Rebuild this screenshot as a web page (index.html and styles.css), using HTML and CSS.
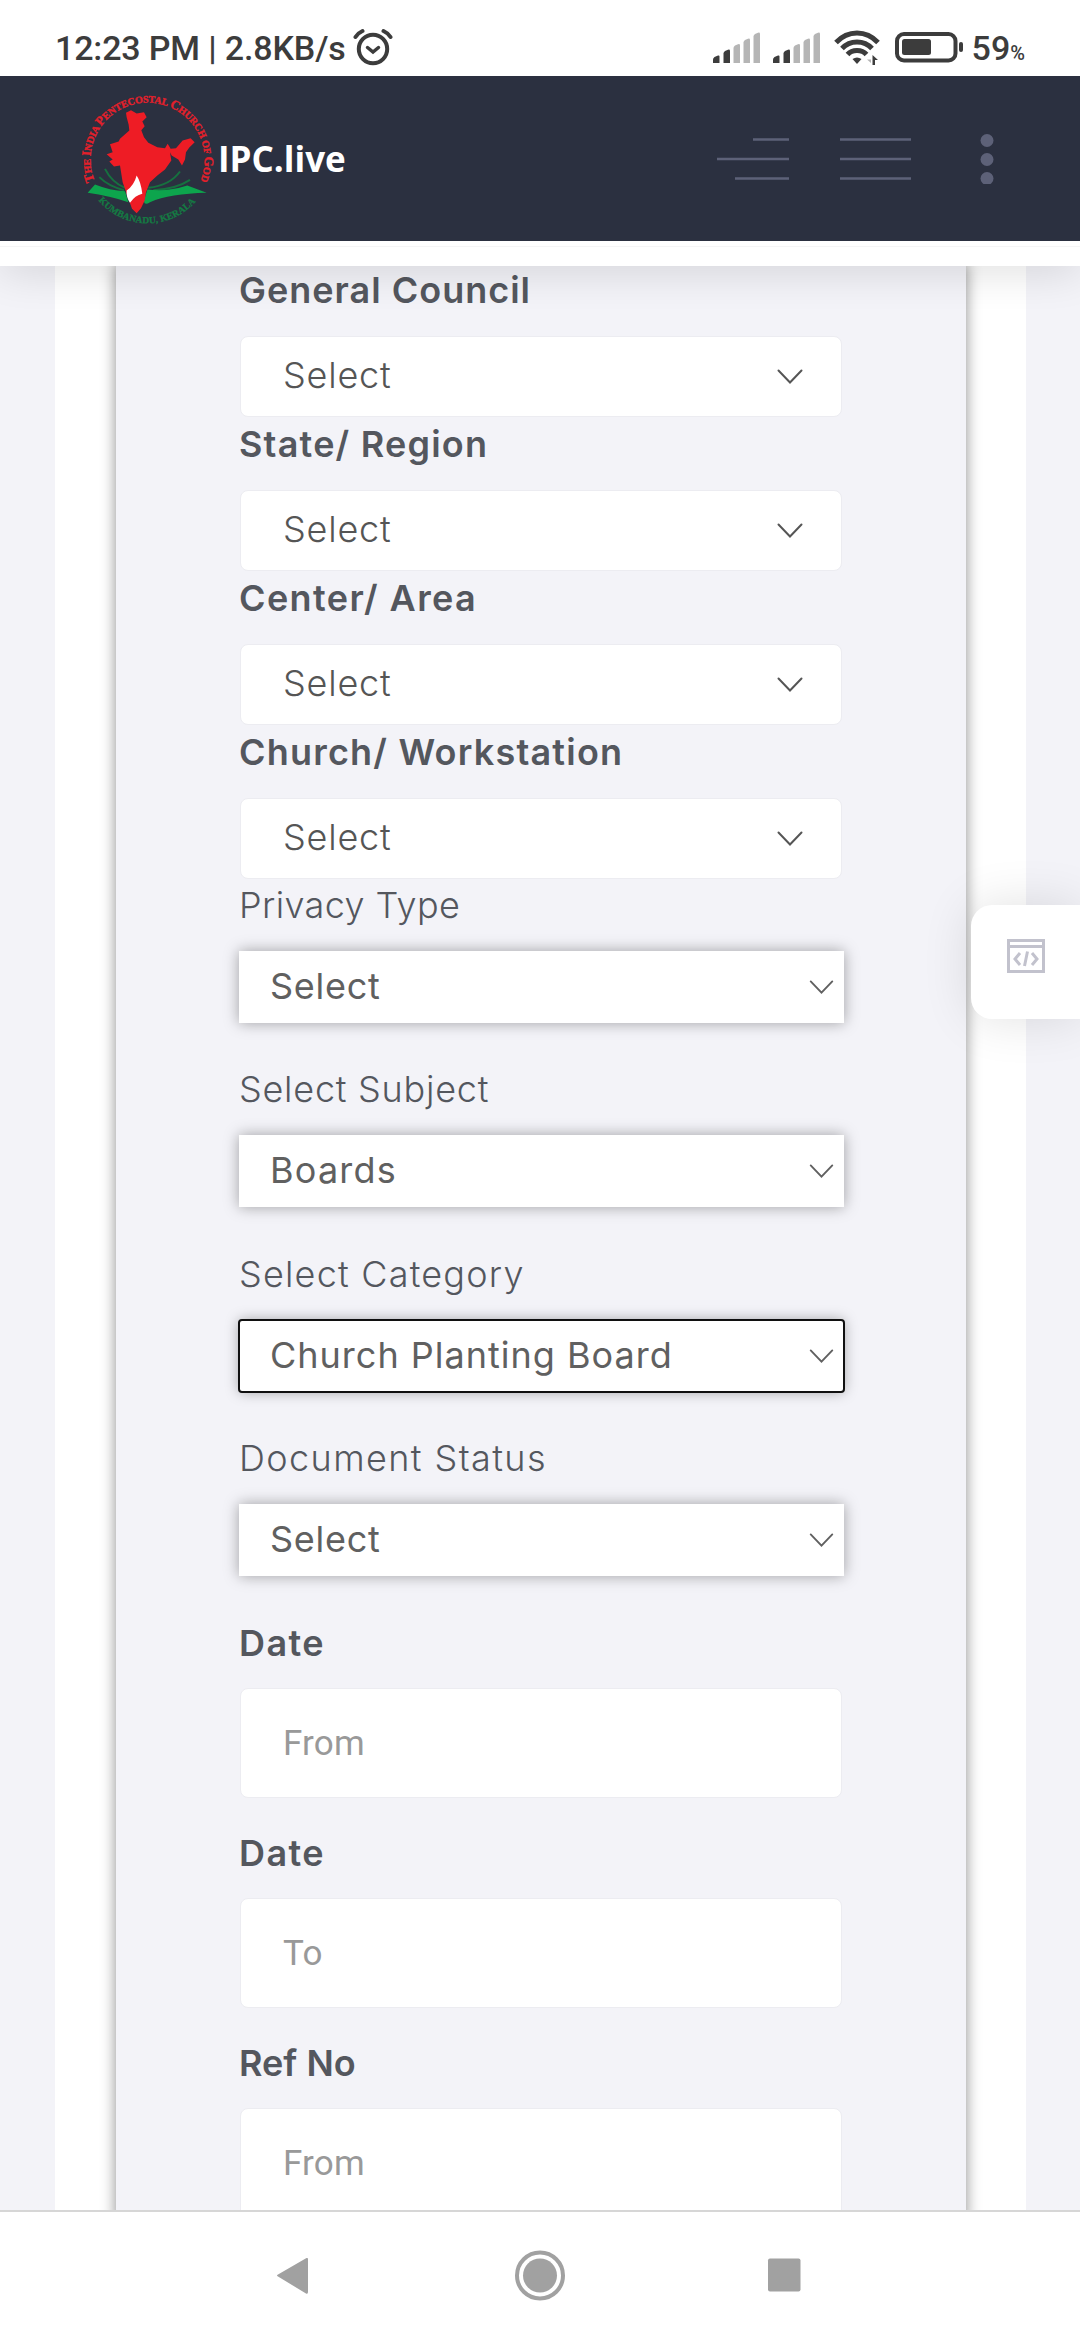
FILE: index.html
```html
<!DOCTYPE html>
<html lang="en">
<head>
<meta charset="utf-8">
<title>IPC.live</title>
<link rel="stylesheet" href="styles.css">
</head>
<body>
<svg class="sprite" width="0" height="0" aria-hidden="true">
  <symbol id="chevron" viewBox="0 0 26 16"><path d="M1.5 1.500 13 13.500 24.500 1.500" fill="none" stroke="currentColor" stroke-width="2" stroke-linecap="round"/></symbol>
  <symbol id="signal" viewBox="0 0 48 32">
    <path d="M0 31V27.500Q0 26 1.500 25L5 23.500Q6.500 23 6.500 24.500V31Z" fill="#3c3c3c"/>
    <path d="M10.500 31V21.500Q10.500 20 12 19L15 17.700Q17 17 17 19V31Z" fill="#3c3c3c"/>
    <path d="M20.500 31V16Q20.500 14.500 22 13.500L25 12.200Q27 11.500 27 13.500V31Z" fill="#b5b5b5"/>
    <path d="M30.500 31V10.500Q30.500 9 32 8L35 6.700Q37 6 37 8V31Z" fill="#b5b5b5"/>
    <path d="M40.500 31V4.500Q40.500 3 42 2L45 .7Q47 0 47 2V31Z" fill="#b5b5b5"/>
  </symbol>
</svg>

<div class="statusbar">
  <span class="clock">12:23 PM | 2.8KB/s</span>
  <svg class="alarm" width="40" height="38" viewBox="0 0 40 38" fill="none" stroke="#3c3c3c" stroke-linecap="round">
    <circle cx="20" cy="21" r="14.200" stroke-width="4"/>
    <path d="M14.500 19.500 20 24 25.500 19.500" stroke-width="3.500"/>
    <path d="M2.500 9Q5 5 9.500 3M37.500 9Q35 5 30.500 3" stroke-width="4"/>
  </svg>
  <div class="status-right">
    <svg class="sig" width="48" height="32"><use href="#signal"/></svg>
    <svg class="sig sig2" width="48" height="32"><use href="#signal"/></svg>
    <svg class="wifi" width="47" height="36" viewBox="0 0 47 36" fill="none" stroke="#3c3c3c">
      <path d="M2 13.500Q11 4 23 4T44 13.500M8 19.500Q14 13 23 13T38 19.500M13.500 25.500Q17 21.500 23 21.500T32.500 25.500" stroke-width="5"/>
      <path d="M18.500 30Q23 27 27.500 30L23 35Z" fill="#3c3c3c" stroke="none"/>
      <path d="M37 26V34L33 30.500H37Z" fill="#b5b5b5" stroke="none"/>
      <path d="M38.500 36V26L44 31H41V36Z" fill="#3c3c3c" stroke="none"/>
    </svg>
    <svg class="battery" width="70" height="32" viewBox="0 0 70 32">
      <rect x="2" y="3" width="58.500" height="26.500" rx="7" fill="none" stroke="#3c3c3c" stroke-width="4"/>
      <rect x="7" y="8" width="29" height="16" rx="2.500" fill="#3c3c3c"/>
      <rect x="64" y="11" width="4" height="10" rx="2" fill="#3c3c3c"/>
    </svg>
    <span class="pct">59<small>%</small></span>
  </div>
</div>

<header class="header">
  <svg class="logo" width="140" height="140" viewBox="0 0 140 140">
    <defs>
      <path id="arcTop" d="M17.600 91.900A57 57 0 1 1 123.400 91.900"/>
      <path id="arcBottom" d="M21.500 111.500A64 64 0 0 0 119.500 111.500"/>
    </defs>
    <text class="ring"><textPath href="#arcTop" textLength="222"><tspan class="cap">T</tspan>HE <tspan class="cap">I</tspan>NDIA <tspan class="cap">P</tspan>ENTECOSTAL <tspan class="cap">C</tspan>HURCH OF <tspan class="cap">G</tspan>OD</textPath></text>
    <g transform="translate(-7 -3.500) scale(.3333)">
      <path d="M105 250Q125 290 165 307M88 275Q115 302 162 314M330 258Q300 300 235 307M360 283Q320 310 250 314" fill="none" stroke="#16713f" stroke-width="6"/>
      <path d="M75 297Q120 315 165 317L175 350Q120 332 53 322ZM232 312Q290 320 352 300L410 322Q300 325 240 350Q222 362 222 345Z" fill="#0da54d"/>
      <path d="M170 95 168 82 183 74 200 84 222 80 230 95 217 108 224 122 214 134 222 155 235 172 262 185 285 188 293 175 302 190 318 188 338 165 362 158 374 170 358 186 348 200 345 222 336 240 325 222 305 210 300 200 304 225 285 252 262 270 240 290 228 320 224 345 213 368 200 383 186 370 172 330 158 290 150 240 132 243 118 228 128 222 110 206 128 200 120 176 146 168 150 160 178 135 176 118Z" fill="#ee1c25"/>
      <path d="M200 270Q213 290 217 325 195 330 180 352 168 335 170 315 192 300 200 270Z" fill="#fff"/>
    </g>
    <text class="ring2"><textPath href="#arcBottom" textLength="110">KUMBANADU, KERALA</textPath></text>
  </svg>
  <span class="brand">IPC.live</span>
  <svg class="tools" width="300" height="50" viewBox="0 0 300 50" fill="none" stroke="#5d6178" stroke-width="2.600">
    <path d="M43 5.500H79M7 25H79M25 44.500H79M130 5.500H201M130 25H201M130 44.500H201"/>
    <g fill="#5d6178" stroke="none"><circle cx="277" cy="6.500" r="6.500"/><circle cx="277" cy="25.500" r="6.500"/><circle cx="277" cy="44.500" r="6.500"/></g>
  </svg>
</header>
<div class="subheader"></div>

<main class="page">
  <div class="sheet">
    <form class="panel">
      <div class="field"><label class="strong t10">General Council</label><div class="pick"><span>Select</span><svg width="26" height="16"><use href="#chevron"/></svg></div></div>
      <div class="field"><label class="strong t12">State/ Region</label><div class="pick"><span>Select</span><svg width="26" height="16"><use href="#chevron"/></svg></div></div>
      <div class="field"><label class="strong t14">Center/ Area</label><div class="pick"><span>Select</span><svg width="26" height="16"><use href="#chevron"/></svg></div></div>
      <div class="field"><label class="strong t12">Church/ Workstation</label><div class="pick"><span>Select</span><svg width="26" height="16"><use href="#chevron"/></svg></div></div>
      <div class="field raised"><label class="t4">Privacy Type</label><div class="drop"><span class="t7">Select</span><svg width="25" height="15"><use href="#chevron"/></svg></div></div>
      <div class="field raised"><label class="t7">Select Subject</label><div class="drop"><span class="t12">Boards</span><svg width="25" height="15"><use href="#chevron"/></svg></div></div>
      <div class="field raised"><label class="t12">Select Category</label><div class="drop focused"><span class="t10">Church Planting Board</span><svg width="25" height="15"><use href="#chevron"/></svg></div></div>
      <div class="field raised"><label class="t14">Document Status</label><div class="drop"><span class="t7">Select</span><svg width="25" height="15"><use href="#chevron"/></svg></div></div>
      <div class="field entry"><label class="strong t14">Date</label><input type="text" placeholder="From"></div>
      <div class="field entry"><label class="strong t14">Date</label><input type="text" placeholder="To"></div>
      <div class="field entry"><label class="strong">Ref No</label><input type="text" placeholder="From"></div>
    </form>
  </div>
  <div class="side-tab">
    <svg width="38" height="34" viewBox="0 0 38 34" fill="none" stroke="#c2c2cd" stroke-width="3"><path d="M1.500 1.500H36.500V32.500H1.500ZM1.500 7.500H36.500M13 14 8 20 13 26M25 14 30 20 25 26M20.500 12.500 17.500 27"/></svg>
  </div>
</main>

<nav class="navbar">
  <svg width="1080" height="128" viewBox="0 0 1080 128" fill="#a1a1a1">
    <path d="M278 62.500 306.500 46Q308 45.500 308 47V80Q308 82.500 306 81.500L278 64.500Q276 63.500 278 62.500Z"/>
    <circle cx="540" cy="63.500" r="17"/><circle cx="540" cy="63.500" r="23" fill="none" stroke="#a1a1a1" stroke-width="4"/>
    <rect x="768" y="46.500" width="32.500" height="33" rx="2"/>
  </svg>
</nav>
</body>
</html>
```
FILE: styles.css
```css
* { box-sizing: border-box; }
body { margin: 0; width: 1080px; height: 2340px; overflow: hidden; display: flex; flex-direction: column; background: #fff; font-family: Inter, "Open Sans", sans-serif; color: #54575e; }
svg { display: block; flex: none; }
.sprite { position: absolute; }

.statusbar { height: 76px; flex: none; display: flex; align-items: flex-start; padding: 28px 55px 0 55px; color: #3c3c3c; font-family: Roboto, sans-serif; font-weight: 500; font-size: 34px; line-height: 40px; }
.clock { letter-spacing: -.15px; }
.alarm { margin: 0 0 0 7px; }
.status-right { margin-left: auto; display: flex; }
.sig { margin-top: 4px; }
.sig2 { margin-left: 12px; }
.wifi { margin: 1px 0 0 13px; }
.battery { margin: 3px 0 0 14px; }
.pct { margin-left: 7px; }
.pct small { font-size: 20px; }

.header { height: 165px; flex: none; display: flex; align-items: center; background: #2b3040; padding: 0 70px 0 77px; }
.logo { overflow: visible; }
.ring { font: 700 10px "Liberation Serif", serif; fill: #e4202b; stroke: #e4202b; stroke-width: .4px; }
.ring .cap { font-size: 13px; }
.ring2 { font: 700 9.5px "Liberation Serif", serif; fill: #157a43; stroke: #157a43; stroke-width: .3px; }
.brand { margin-left: 1px; color: #fff; font: 700 35px/50px "Open Sans", sans-serif; }
.tools { margin-left: auto; }

.subheader { height: 25px; flex: none; position: relative; z-index: 2; background: linear-gradient(#fff 5px, #f5f5f6 5px, #f5f5f6 6px, #fff 6px); box-shadow: 0 0 45px rgba(0, 0, 0, .2); clip-path: inset(0 0 -60px 0); }

.page { height: 1944px; flex: none; position: relative; overflow: hidden; background: #f3f3f8; padding: 0 54px 0 55px; }
.sheet { display: flow-root; background: #fff; height: 1944px; padding: 0 60px 0 61px; }
.panel { height: 1960px; margin: -3px 0 0; padding: 0 124px; background: #f3f3f8; box-shadow: 0 0 14px rgba(0, 0, 0, .45); }
.field { height: 154px; }
label { display: block; height: 73px; margin-left: -1px; line-height: 54px; font-size: 36px; font-weight: 300; white-space: nowrap; }
label.strong { font-weight: 600; }
.t4 { letter-spacing: .4px; }
.t7 { letter-spacing: .75px; }
.t10 { letter-spacing: 1px; }
.t12 { letter-spacing: 1.2px; }
.t14 { letter-spacing: 1.4px; }
.pick { height: 81px; display: flex; align-items: center; justify-content: space-between; border: 1px solid #ececf1; border-radius: 8px; background: #fff; padding: 0 38px 0 42px; font-size: 36px; line-height: 72px; font-weight: 300; color: #555; letter-spacing: .8px; }
.pick span { margin-top: -3px; }
.pick svg { margin-top: 1px; }
.raised { height: 184.300px; }
.raised label { height: 72px; line-height: 53px; }
.drop { height: 72px; margin: 0 -2px 0 -1px; display: flex; align-items: center; justify-content: space-between; background: #fff; box-shadow: 0 0 14px rgba(0, 0, 0, .35); padding: 0 10px 0 31px; font-size: 36px; line-height: 68px; color: #606060; }
.drop span { margin-top: -2px; }
.drop svg { margin-top: 1px; }
.focused { outline: 2px solid #101010; border-radius: 3px; outline-offset: -1px; }
.entry { height: 210px; }
.entry label { height: 72px; }
.entry input { display: block; width: 100%; height: 110px; border: 1px solid #ececf1; border-radius: 8px; background: #fff; padding: 0 42px; font: 400 35px Roboto, sans-serif; letter-spacing: .2px; }
.entry input::placeholder { color: #999; opacity: 1; }

.side-tab { position: absolute; right: 0; top: 639px; width: 109px; height: 114px; padding: 34px 36px; background: #fff; border-radius: 21px 0 0 21px; box-shadow: 0 0 50px rgba(0, 0, 0, .12); }
.navbar { height: 130px; flex: none; border-top: 2px solid #d6d6d6; background: #fff; }
```
